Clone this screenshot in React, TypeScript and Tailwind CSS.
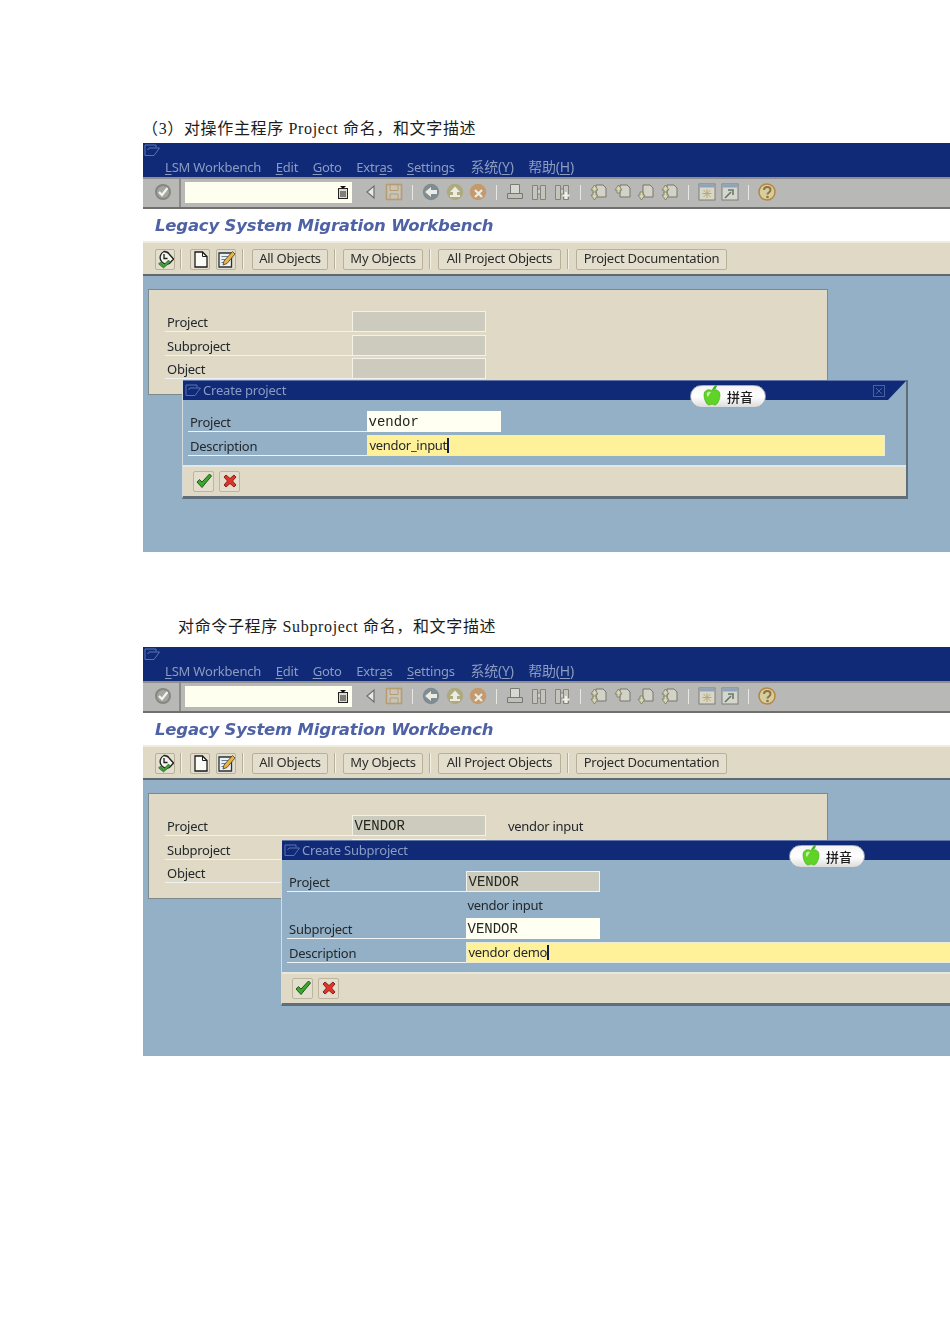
import React from "react";

const UI = "font-['Noto_Sans','Liberation_Sans',sans-serif]";

function Ic({ children, size = 18 }: { children: React.ReactNode; size?: number }) {
  return (
    <svg width={size} height={size} viewBox="0 0 18 18" fill="none">
      {children}
    </svg>
  );
}

const CheckRound = () => (
  <Ic>
    <circle cx="9" cy="9" r="8" fill="#85877f" />
    <circle cx="9" cy="9" r="6" fill="#a3a5a0" />
    <path d="M5 9l3 3 5.500-7" stroke="#f3f3ee" strokeWidth="2.200" />
  </Ic>
);
const Back = () => (
  <Ic>
    <path d="M12 3v12L5 9z" fill="#e8e8e4" stroke="#6f6f6a" strokeWidth="1.200" />
  </Ic>
);
const Save = () => (
  <Ic>
    <rect x="1.500" y="1.500" width="15" height="15" fill="#c6c5ba" stroke="#b89c70" strokeWidth="1.600" />
    <path d="M5 2v5.500h8V2" stroke="#b89c70" strokeWidth="1" />
    <path d="M5 16v-5h8v5" stroke="#b89c70" strokeWidth="1" />
  </Ic>
);
const NavBack = () => (
  <Ic>
    <circle cx="9" cy="9" r="8.200" fill="#7f8d92" />
    <path d="M3 9l6-5v3h6v4H9v3z" fill="#ecece4" />
  </Ic>
);
const NavUp = () => (
  <Ic>
    <circle cx="9" cy="9" r="8.200" fill="#aeaa80" />
    <path d="M9 3.500l5 5.500h-3v3h3v2H4v-2h3V9H4z" fill="#ecece4" />
  </Ic>
);
const NavCancel = () => (
  <Ic>
    <circle cx="9" cy="9" r="8.200" fill="#c49a6c" />
    <path d="M6 7l7 7M13 7l-7 7" stroke="#ecece4" strokeWidth="2.200" />
  </Ic>
);
const Print = () => (
  <Ic>
    <path d="M4.500 1.500h9v9h-9z" fill="#d8d8d2" stroke="#7b7b76" />
    <path d="M1.500 10.500h15v5h-15z" fill="#c0c0ba" stroke="#777772" />
  </Ic>
);
const Find = ({ plus }: { plus?: boolean }) => (
  <Ic>
    <path d="M2.500 2.500h5v14h-5zM10.500 2.500h5v14h-5z" fill="#c4c4bd" stroke="#84847e" />
    <path d="M7.500 6h3v5h-3z" fill="#d0d0c9" stroke="#84847e" />
    {plus && <path d="M13 9v7M9.500 12.500h7" stroke="#f0f0e6" strokeWidth="2.200" />}
  </Ic>
);
const Page = ({ up, down }: { up?: boolean; down?: boolean }) => (
  <Ic>
    <path d="M6 2h7l3 3v9H6z" fill="#d3d2c7" stroke="#77776f" />
    {up && <path d="M1 7l3.500-5L8 7H6v3H3V7z" fill="#d8d6ae" stroke="#77786a" strokeWidth=".8" />}
    {down && <path d="M1 12l3.500 5L8 12H6V9H3v3z" fill="#d8d6ae" stroke="#77786a" strokeWidth=".8" />}
  </Ic>
);
const WinStar = () => (
  <Ic>
    <rect x="1" y="1" width="16" height="16" fill="#d9d8c6" stroke="#7d7f7c" />
    <rect x="1.500" y="1.500" width="15" height="3" fill="#8ea2c2" />
    <path d="M9 6v9M4.500 10.500h9M5.500 7l7 7M12.500 7l-7 7" stroke="#b8a676" strokeWidth="1" />
  </Ic>
);
const WinArrow = () => (
  <Ic>
    <rect x="1" y="1" width="16" height="16" fill="#d5d6cc" stroke="#7d7f7c" />
    <rect x="1.500" y="1.500" width="15" height="3" fill="#8ea2c2" />
    <path d="M4 15l6-6M7 7h5v5" stroke="#68776c" strokeWidth="1.600" />
  </Ic>
);
const Help = () => (
  <Ic>
    <circle cx="9" cy="9" r="8" fill="#d6ce9e" stroke="#b5863f" strokeWidth="1.500" />
    <path d="M6 7c0-4 6.500-4 6.500 0 0 2.500-3 2.500-3 4.500" stroke="#8f7342" strokeWidth="2" />
    <circle cx="9.500" cy="14" r="1.300" fill="#8f7342" />
  </Ic>
);
const History = () => (
  <Ic size={20}>
    <path d="M8 1.500a6.500 6.500 0 0 1 5.500 3l4 4.500-4 4.500a6.500 6.500 0 1 1-5.500-12z" fill="#f6f5ec" stroke="#1e1e1e" strokeWidth="1.300" />
    <path d="M8 4v4.500h3.500" stroke="#1e1e1e" strokeWidth="1.300" />
    <path d="M4.500 12l3 3 5-5 2 2-7 6-5-4z" fill="#3f9b3b" stroke="#245e20" strokeWidth=".6" />
  </Ic>
);
const NewDoc = () => (
  <Ic size={20}>
    <path d="M4 2h7.500l4.500 4.500V17H4z" fill="#fbfbf5" stroke="#1a1a1a" strokeWidth="1.300" />
    <path d="M11.500 2v4.500H16" stroke="#1a1a1a" />
  </Ic>
);
const EditDoc = () => (
  <Ic size={20}>
    <path d="M2 3h12.500v14H2z" fill="#eef1f3" stroke="#27333c" strokeWidth="1.300" />
    <path d="M4.500 6.500h7M4.500 9.500h4M4.500 12.500h3" stroke="#6d7f95" />
    <path d="M6 15l1-4 8.500-9.500 2.500 2.500-8 9.500z" fill="#e8b54a" stroke="#4b3a16" strokeWidth=".8" />
  </Ic>
);
const Ok = () => (
  <Ic>
    <path d="M2 10l2.500-2.500L7 10l7.500-8L16.500 4 7 15.500z" fill="#3ea52f" stroke="#1f5a17" />
  </Ic>
);
const Cancel = () => (
  <Ic>
    <path d="M3 5l2-2 4 3.500L13 3l2 2-3.500 4 3.500 4-2 2-4-3.500L5 15l-2-2 3.500-4z" fill="#e0342a" stroke="#8b2018" />
  </Ic>
);
const Apple = () => (
  <svg width="18" height="22" viewBox="0 0 18 22">
    <path d="M9 6c1-3 3-5 5-5-.2 3-2 5-5 5z" fill="#3db21e" />
    <path d="M9 6.500c3-1.500 8-1 8 4.500 0 5-3 10-5 10-1.500 0-2-.7-3-.7s-1.500.7-3 .7c-2 0-5-5-5-10 0-5.500 5-6 8-4.500z" fill="#5fd326" stroke="#3da815" strokeWidth=".6" />
    <path d="M4 9c1-1.500 3-1.500 4-1-1 1-2 3-3 5-1-1-1.500-2.500-1-4z" fill="#c5f59a" />
  </svg>
);
const WinGlyph = ({ className = "" }: { className?: string }) => (
  <svg width="18" height="13" viewBox="0 0 18 13" fill="none" className={className}>
    <path d="M1 1h11v2.500M1 1v10.500h9l5.500-7.500H5l-1.500 2" stroke="#5c73ad" strokeWidth="1" />
  </svg>
);

const Sep = () => (
  <div className="flex w-[13.5px] justify-center">
    <div className="h-[15px] w-px bg-[#e6e6e2]" />
  </div>
);
const Cell = ({ children }: { children: React.ReactNode }) => (
  <div className="flex w-[23.5px] justify-center">{children}</div>
);

function U({ children }: { children: string }) {
  return <span className="underline underline-offset-2">{children}</span>;
}

function MenuBar() {
  return (
    <div className="relative h-[34px] bg-[#112a78] pl-[22px]">
      <WinGlyph className="absolute left-[1px] top-[1px]" />
      <div className={`${UI} flex gap-[14.5px] pt-[13.5px] text-[13px] leading-[20px] tracking-[-0.2px] text-[#8a9cc0]`}>
        <span><U>L</U>SM Workbench</span>
        <span><U>E</U>dit</span>
        <span><U>G</U>oto</span>
        <span>Extr<U>a</U>s</span>
        <span><U>S</U>ettings</span>
        <span className="ml-[1px] font-['Noto_Sans','Noto_Sans_CJK_SC',sans-serif] text-[14px]">系统(<U>Y</U>)</span>
        <span className="font-['Noto_Sans','Noto_Sans_CJK_SC',sans-serif] text-[14px]">帮助(<U>H</U>)</span>
      </div>
    </div>
  );
}

function Toolbar() {
  return (
    <div className="flex h-[32px] items-center border-b-2 border-[#6f6f6c] bg-[#b8b8b6] shadow-[inset_0_2px_0_#8f8f8d]">
      <div className="flex h-full w-[38px] items-center justify-center border-r-2 border-[#8c8c8a]">
        <span className="ml-[4px]"><CheckRound /></span>
      </div>
      <div className="ml-[4px] flex h-[21px] w-[167px] items-center justify-end bg-[#fffff0] pr-[3px]">
        <svg width="12" height="13" viewBox="0 0 12 13">
          <path d="M3 0h6L6 3z" fill="#111" />
          <rect x="1.500" y="2.500" width="9" height="10" fill="#dcdcd2" stroke="#222" />
          <path d="M3 6h6M3 8h6M3 10h6" stroke="#222" />
        </svg>
      </div>
      <div className="ml-[7px] flex items-center">
        <Cell><Back /></Cell>
        <Cell><Save /></Cell>
        <Sep />
        <Cell><NavBack /></Cell>
        <Cell><NavUp /></Cell>
        <Cell><NavCancel /></Cell>
        <Sep />
        <Cell><Print /></Cell>
        <Cell><Find /></Cell>
        <Cell><Find plus /></Cell>
        <Sep />
        <Cell><Page up down /></Cell>
        <Cell><Page up /></Cell>
        <Cell><Page down /></Cell>
        <Cell><Page up down /></Cell>
        <Sep />
        <Cell><WinStar /></Cell>
        <Cell><WinArrow /></Cell>
        <Sep />
        <Cell><Help /></Cell>
      </div>
    </div>
  );
}

const TSep = ({ className }: { className: string }) => <div className={`h-[20px] w-px bg-[#f4f1e6] shadow-[-1px_0_0_#b5ae98] ${className}`} />;
const TBtn = ({ children, className = "" }: { children: React.ReactNode; className?: string }) => (
  <div className={`${UI} flex h-[21px] items-center justify-center rounded-[2px] border border-[#b8b19a] bg-[#e3decd] text-[13px] tracking-[-0.25px] text-[#2b2b28] ${className}`}>
    {children}
  </div>
);

function ToolRow() {
  return (
    <div className="flex h-[35px] items-center border-t-2 border-b-2 border-t-[#efebdd] border-b-[#5f6a6e] bg-[#dfd9c6] pl-[12px] pt-[1px]">
      <TBtn className="w-[20px]"><History /></TBtn>
      <TSep className="ml-[6px]" />
      <TBtn className="ml-[8px] w-[20px]"><NewDoc /></TBtn>
      <TBtn className="ml-[6px] w-[20px]"><EditDoc /></TBtn>
      <TSep className="ml-[7px]" />
      <TBtn className="ml-[8px] w-[76px]">All Objects</TBtn>
      <TSep className="ml-[7px]" />
      <TBtn className="ml-[7px] w-[80px]">My Objects</TBtn>
      <TSep className="ml-[7px]" />
      <TBtn className="ml-[7px] w-[123px]">All Project Objects</TBtn>
      <TSep className="ml-[7px]" />
      <TBtn className="ml-[7px] w-[151px]">Project Documentation</TBtn>
    </div>
  );
}

type FieldProps = { label?: string; value?: string; kind: "ro" | "in" | "yellow" | "text"; mono?: boolean; caret?: boolean; after?: string; labelWidth: string };

function Row({ label, value, kind, mono, caret, after, labelWidth }: FieldProps) {
  const tone =
    kind === "ro"
      ? "w-[134px] border border-[#f3f1e8] bg-[#cdcbbd]"
      : kind === "in"
        ? "w-[134px] bg-[#fffff2]"
        : kind === "yellow"
          ? "flex-1 bg-[#fff09a] border border-[#e9edd8]"
          : "w-[134px]";
  return (
    <div className="mb-[2.500px] flex h-[21px] items-stretch">
      <div className={`${UI} ${labelWidth} ${label ? "border-b border-[#eef2f2]" : ""} pl-[2px] text-[13px] leading-[22px] tracking-[-0.25px] text-[#23282c]`}>
        {label}
      </div>
      <div className={`${tone} flex items-center pl-[1.500px]`}>
        {value && (
          <span className={mono ? "mt-[1px] font-['Liberation_Mono',monospace] text-[14px] text-[#22261f]" : `${UI} mt-[2px] text-[13px] tracking-[-0.3px] text-[#23282c]`}>
            {value}
          </span>
        )}
        {caret && <span className="h-[15px] w-[2px] bg-[#101b4f]" />}
      </div>
      {after && <div className={`${UI} ml-[22px] text-[13px] leading-[22px] tracking-[-0.3px] text-[#23282c]`}>{after}</div>}
    </div>
  );
}

function PinyinPill({ className }: { className: string }) {
  return (
    <div className={`absolute flex h-[23px] w-[76px] items-center rounded-full border border-[#a3aab5] bg-gradient-to-b from-[#f4f4f4] via-[#ffffff] to-[#dcdcdc] pl-[12px] ${className}`}>
      <span className="-mt-[4px]"><Apple /></span>
      <span className="ml-[6px] font-['Noto_Sans_CJK_SC',sans-serif] text-[13px] font-medium text-[#1c1c1c]">拼音</span>
    </div>
  );
}

function Dialog({ title, className, children }: { title: string; className: string; children: React.ReactNode }) {
  return (
    <div className={`absolute w-[726px] border-r-2 border-b-[3px] border-l border-[#5f6e78] border-l-[#d5dcdc] bg-[#93b0c6] shadow-[inset_0_1px_0_#5f75a8] ${className}`}>
      <div className={`${UI} mt-[1px] flex h-[19px] items-center bg-[#112a78] pl-[2px] text-[13px] tracking-[-0.2px] text-[#8a9cc0] [clip-path:polygon(0_0,100%_0,calc(100%-18px)_100%,0_100%)]`}>
        <WinGlyph />
        {title}
        <div className="ml-auto mr-[21px] flex h-[12px] w-[12px] items-center justify-center border border-[#4a62a0]">
          <svg width="8" height="8" viewBox="0 0 8 8"><path d="M1 1l6 6M7 1L1 7" stroke="#4a62a0" /></svg>
        </div>
      </div>
      <div className="pl-[5px] pr-[21px] pt-[11px]">{children}</div>
      <PinyinPill className="left-[507px] top-[5px]" />
      <div className="mt-[9px] flex h-[31px] items-center gap-[5px] border-t-2 border-[#e6e8e0] bg-[#dfd9c6] pl-[10px]">
        <div className="flex h-[21px] w-[21px] items-center justify-center rounded-[2px] border border-[#bdb69f] bg-[#e3decd]"><Ok /></div>
        <div className="flex h-[21px] w-[21px] items-center justify-center rounded-[2px] border border-[#bdb69f] bg-[#e3decd]"><Cancel /></div>
      </div>
    </div>
  );
}

function Screen({ project, desc, children }: { project?: string; desc?: string; children: React.ReactNode }) {
  const lw = "w-[187px]";
  return (
    <div className="relative ml-[143px] h-[409px] w-[807px] overflow-hidden bg-[#93b0c6] blur-[0.3px]">
      <MenuBar />
      <Toolbar />
      <div className="flex h-[32px] items-center bg-white pl-[12px] pt-[3px] font-['DejaVu_Sans',sans-serif] text-[16.5px] font-bold italic tracking-[-0.2px] text-[#4f62a5]">
        Legacy System Migration Workbench
      </div>
      <ToolRow />
      <div className="ml-[5px] mt-[13px] h-[106px] w-[680px] border border-[#7c8a8c] bg-[#dfd9c6] pl-[16px] pt-[21px]">
        <Row label="Project" kind="ro" value={project} mono after={desc} labelWidth={lw} />
        <Row label="Subproject" kind="ro" labelWidth={lw} />
        <Row label="Object" kind="ro" labelWidth={lw} />
      </div>
      {children}
    </div>
  );
}

const captionCls =
  "h-[24px] whitespace-nowrap font-['Liberation_Serif','Noto_Sans_CJK_SC',serif] text-[16px] leading-[24px] tracking-[0.65px] text-[#1c1c1c]";

export default function App() {
  const lw = "w-[179px]";
  return (
    <div className="h-[1344px] w-[950px] overflow-hidden bg-white pt-[117px]">
      <p className={`${captionCls} ml-[142px] mb-[2px]`}>（3）对操作主程序 Project 命名，和文字描述</p>
      <Screen>
        <Dialog title="Create project" className="left-[39px] top-[237px]">
          <Row label="Project" kind="in" value="vendor" mono labelWidth={lw} />
          <Row label="Description" kind="yellow" value="vendor_input" caret labelWidth={lw} />
        </Dialog>
      </Screen>
      <p className={`${captionCls} ml-[178px] mt-[63px] mb-[8px]`}>对命令子程序 Subproject 命名，和文字描述</p>
      <Screen project="VENDOR" desc="vendor input">
        <Dialog title="Create Subproject" className="left-[138px] top-[193px]">
          <Row label="Project" kind="ro" value="VENDOR" mono labelWidth={lw} />
          <Row kind="text" value="vendor input" labelWidth={lw} />
          <Row label="Subproject" kind="in" value="VENDOR" mono labelWidth={lw} />
          <Row label="Description" kind="yellow" value="vendor demo" caret labelWidth={lw} />
        </Dialog>
      </Screen>
    </div>
  );
}
